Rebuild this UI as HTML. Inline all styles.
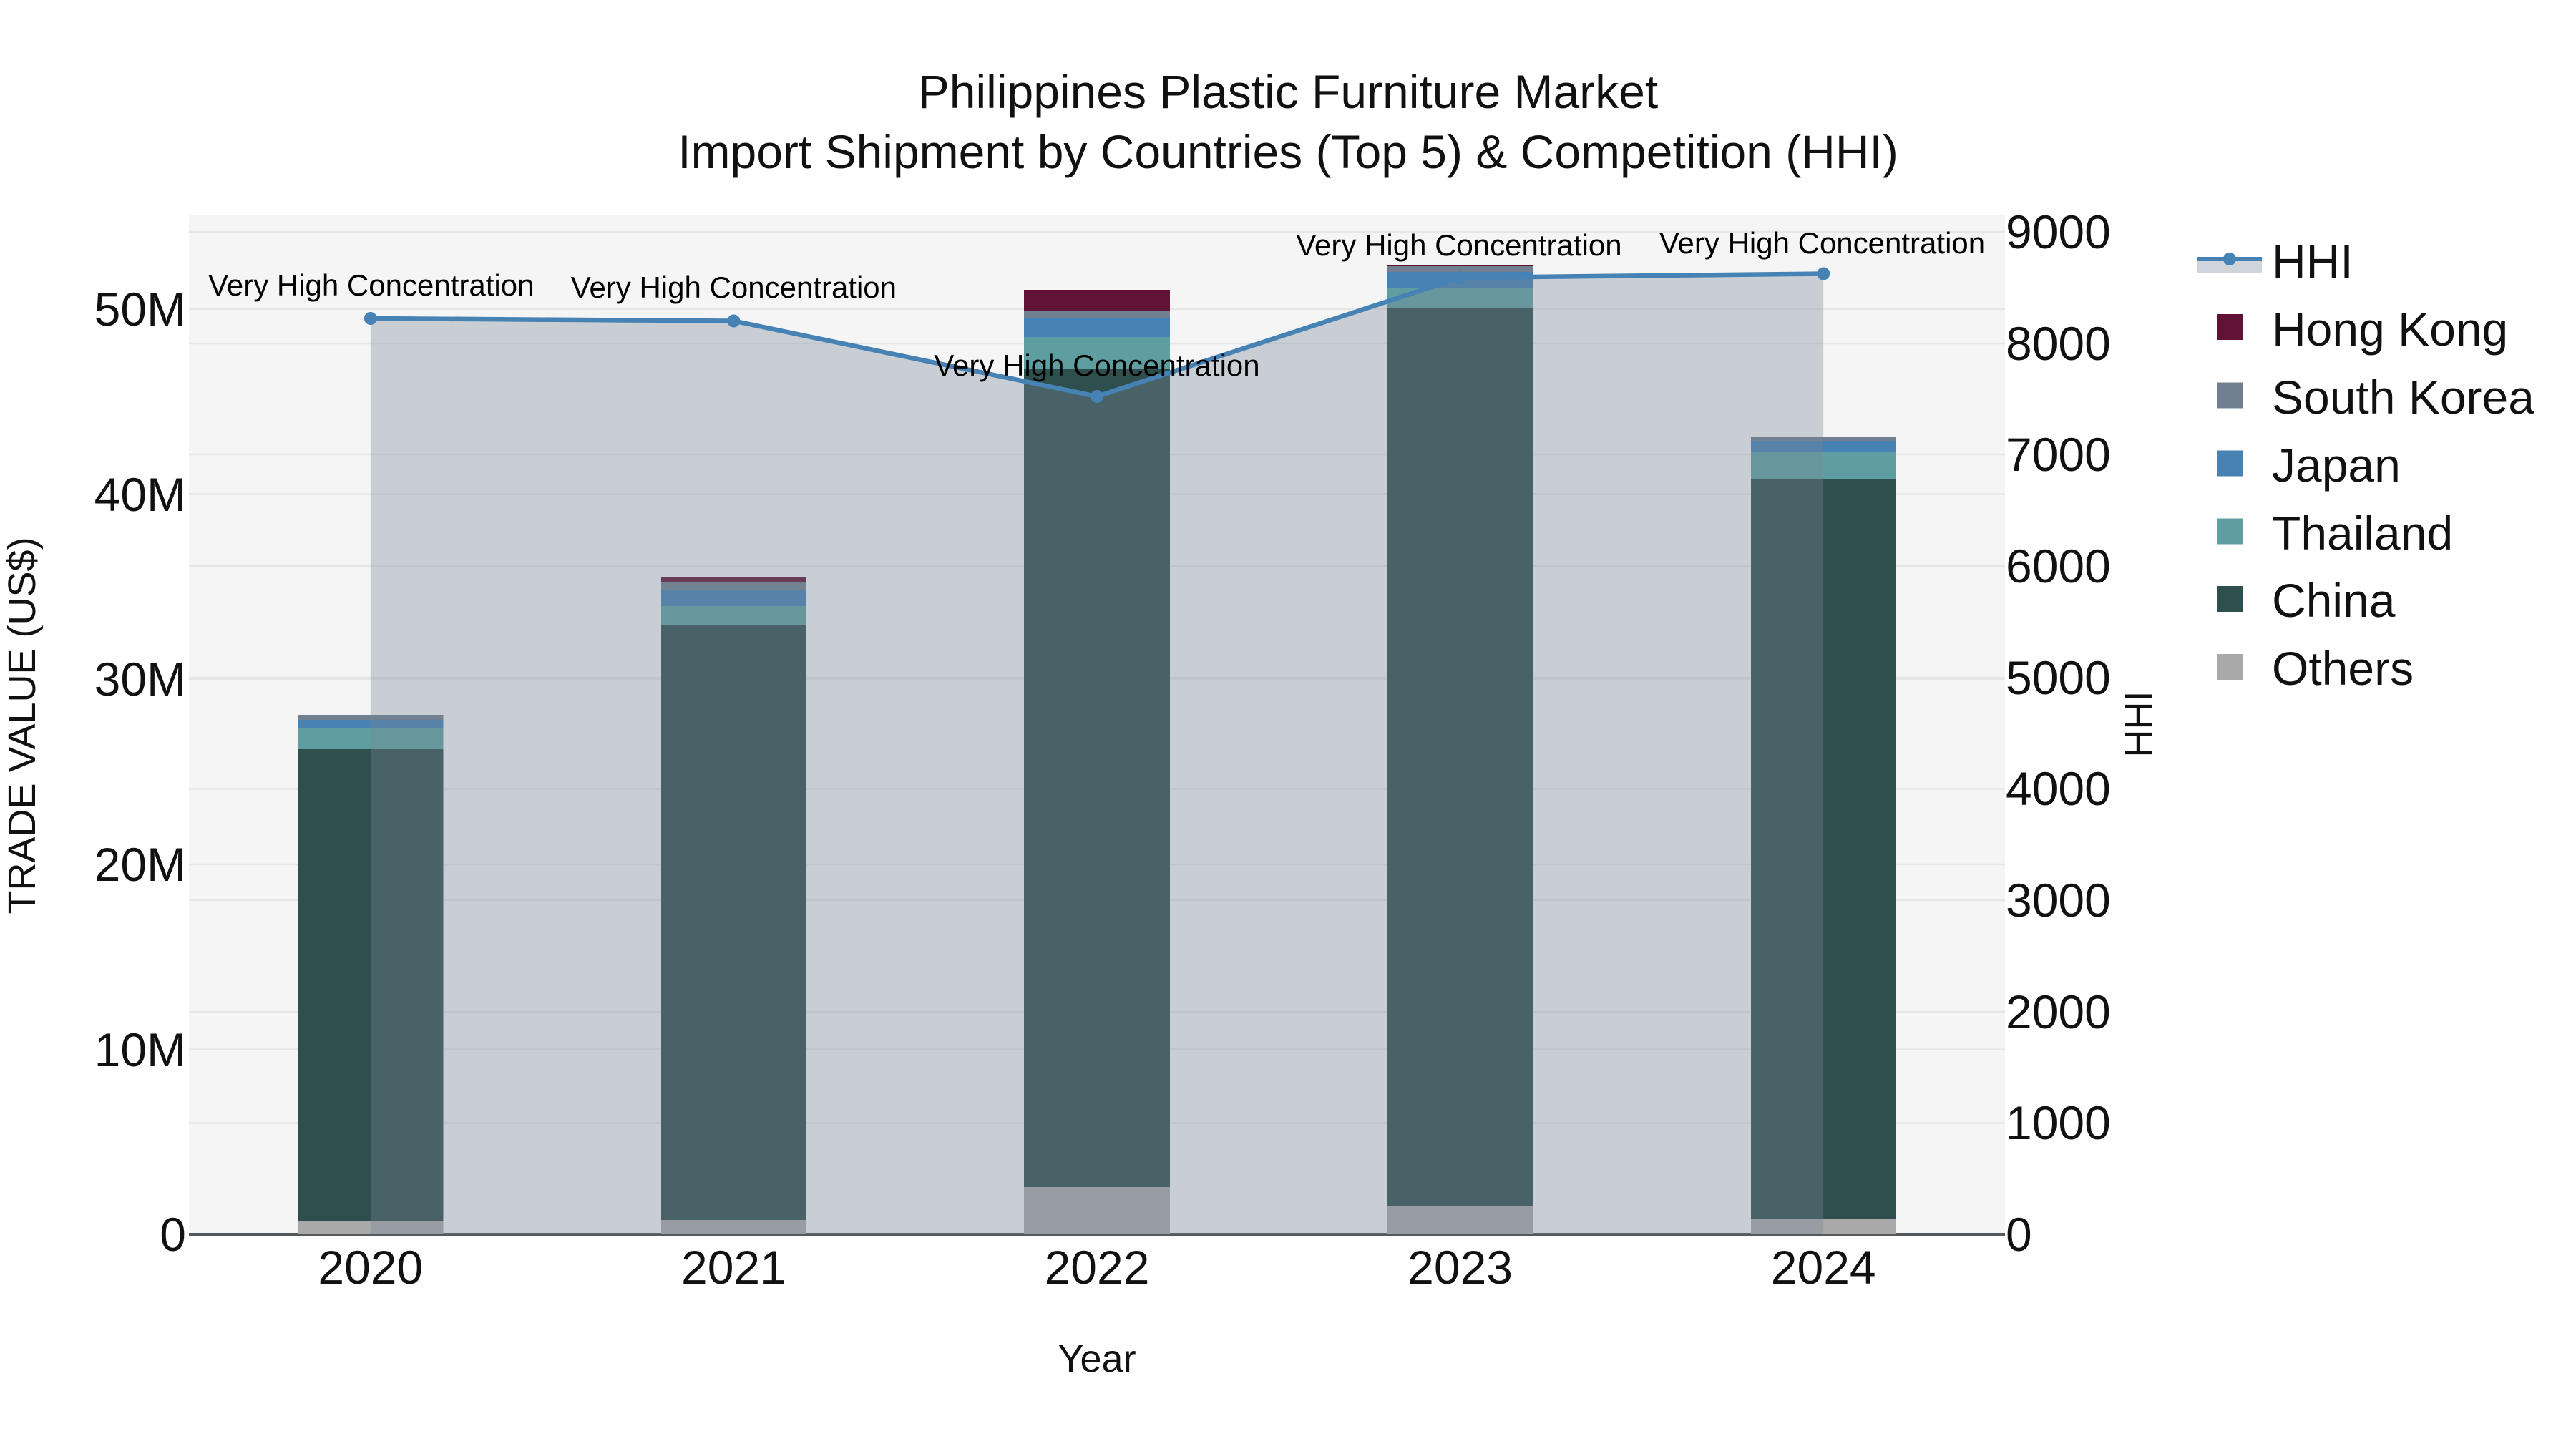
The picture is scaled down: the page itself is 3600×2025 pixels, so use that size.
<!DOCTYPE html>
<html>
<head>
<meta charset="utf-8">
<style>
html,body{margin:0;padding:0;background:#fff;width:3600px;height:2025px;overflow:hidden}
svg{display:block}
text{font-family:"Liberation Sans",sans-serif;fill:#111}
.t{font-size:66px}
.a{font-size:42px;fill:#000;text-anchor:middle}
.ax{font-size:54px}
.l{text-anchor:end}
.m{text-anchor:middle}
</style>
</head>
<body>
<svg width="3600" height="2025" viewBox="0 0 3600 2025" xmlns="http://www.w3.org/2000/svg">
<rect width="3600" height="2025" fill="#fff"/>
<rect x="264" y="300" width="2538" height="1425" fill="#f5f5f5"/>
<!-- gridlines -->
<g stroke="#e6e6e6" stroke-width="2.4">
<path d="M264 432H2802M264 690.5H2802M264 949H2802M264 1208H2802M264 1466.5H2802"/>
<path d="M264 324H2802M264 480H2802M264 635H2802M264 791H2802M264 947H2802M264 1102.5H2802M264 1258H2802M264 1414H2802M264 1569.500H2802"/>
</g>
<rect x="264" y="1723" width="2538" height="4" fill="#56595c"/>
<!-- bars -->
<g shape-rendering="crispEdges">
<!-- 2020 -->
<rect x="416" y="1706" width="203.500" height="19" fill="#a9a9a9"/>
<rect x="416" y="1047" width="203.500" height="659" fill="#2f4f4f"/>
<rect x="416" y="1018" width="203.500" height="29" fill="#5f9ea0"/>
<rect x="416" y="1006" width="203.500" height="12" fill="#4682b4"/>
<rect x="416" y="999" width="203.500" height="7" fill="#708090"/>
<!-- 2021 -->
<rect x="924" y="1705" width="203" height="20" fill="#a9a9a9"/>
<rect x="924" y="874" width="203" height="831" fill="#2f4f4f"/>
<rect x="924" y="847" width="203" height="27" fill="#5f9ea0"/>
<rect x="924" y="825" width="203" height="22" fill="#4682b4"/>
<rect x="924" y="813" width="203" height="12" fill="#708090"/>
<rect x="924" y="806" width="203" height="7" fill="#611335"/>
<!-- 2022 -->
<rect x="1431" y="1659" width="204" height="66" fill="#a9a9a9"/>
<rect x="1431" y="515" width="204" height="1144" fill="#2f4f4f"/>
<rect x="1431" y="471" width="204" height="44" fill="#5f9ea0"/>
<rect x="1431" y="445" width="204" height="26" fill="#4682b4"/>
<rect x="1431" y="434" width="204" height="11" fill="#708090"/>
<rect x="1431" y="405" width="204" height="29" fill="#611335"/>
<!-- 2023 -->
<rect x="1939" y="1685" width="203" height="40" fill="#a9a9a9"/>
<rect x="1939" y="431" width="203" height="1254" fill="#2f4f4f"/>
<rect x="1939" y="402" width="203" height="29" fill="#5f9ea0"/>
<rect x="1939" y="380" width="203" height="22" fill="#4682b4"/>
<rect x="1939" y="372" width="203" height="8" fill="#708090"/>
<rect x="1939" y="371" width="203" height="1" fill="#611335"/>
<!-- 2024 -->
<rect x="2447" y="1703" width="203" height="22" fill="#a9a9a9"/>
<rect x="2447" y="669" width="203" height="1034" fill="#2f4f4f"/>
<rect x="2447" y="632" width="203" height="37" fill="#5f9ea0"/>
<rect x="2447" y="617" width="203" height="15" fill="#4682b4"/>
<rect x="2447" y="611" width="203" height="6" fill="#708090"/>
</g>
<!-- area -->
<path d="M517.800 445L1025.400 448.500L1533 554L2040.600 388L2548.200 382.500V1725H517.800Z" fill="#778899" fill-opacity="0.35"/>
<!-- line -->
<path d="M517.800 445L1025.400 448.500L1533 554L2040.600 388L2548.200 382.500" fill="none" stroke="#4682b4" stroke-width="6.500"/>
<g fill="#4682b4">
<circle cx="517.800" cy="445" r="9"/>
<circle cx="1025.400" cy="448.500" r="9"/>
<circle cx="1533" cy="554" r="9"/>
<circle cx="2040.600" cy="388" r="9"/>
<circle cx="2548.200" cy="382.500" r="9"/>
</g>
<!-- annotations -->
<text class="a" x="518.800" y="413">Very High Concentration</text>
<text class="a" x="1025.400" y="416">Very High Concentration</text>
<text class="a" x="1533" y="525">Very High Concentration</text>
<text class="a" x="2039" y="357">Very High Concentration</text>
<text class="a" x="2546.500" y="354">Very High Concentration</text>
<!-- title -->
<text class="t m" x="1800" y="151">Philippines Plastic Furniture Market</text>
<text class="t m" x="1800" y="235">Import Shipment by Countries (Top 5) &amp; Competition (HHI)</text>
<!-- left ticks -->
<text class="t l" x="260" y="455">50M</text>
<text class="t l" x="260" y="714">40M</text>
<text class="t l" x="260" y="972">30M</text>
<text class="t l" x="260" y="1231">20M</text>
<text class="t l" x="260" y="1490">10M</text>
<text class="t l" x="260" y="1748">0</text>
<!-- right ticks -->
<text class="t" x="2803" y="347">9000</text>
<text class="t" x="2803" y="503">8000</text>
<text class="t" x="2803" y="658">7000</text>
<text class="t" x="2803" y="814">6000</text>
<text class="t" x="2803" y="970">5000</text>
<text class="t" x="2803" y="1125">4000</text>
<text class="t" x="2803" y="1281">3000</text>
<text class="t" x="2803" y="1437">2000</text>
<text class="t" x="2803" y="1592">1000</text>
<text class="t" x="2803" y="1748">0</text>
<!-- x ticks -->
<text class="t m" x="517.800" y="1794">2020</text>
<text class="t m" x="1025.400" y="1794">2021</text>
<text class="t m" x="1533" y="1794">2022</text>
<text class="t m" x="2040.600" y="1794">2023</text>
<text class="t m" x="2548.200" y="1794">2024</text>
<!-- axis titles -->
<text class="ax m" x="1533" y="1917">Year</text>
<text class="ax m" transform="translate(49 1014) rotate(-90)">TRADE VALUE (US$)</text>
<text class="ax m" transform="translate(3007 1012) rotate(-90)">HHI</text>
<!-- legend -->
<rect x="3071" y="362" width="90" height="19" fill="#778899" fill-opacity="0.35"/>
<rect x="3071" y="359" width="90" height="6" fill="#4682b4"/>
<circle cx="3116" cy="362" r="9" fill="#4682b4"/>
<rect x="3098" y="439" width="36" height="36" fill="#611335"/>
<rect x="3098" y="534.500" width="36" height="36" fill="#708090"/>
<rect x="3098" y="629.500" width="36" height="36" fill="#4682b4"/>
<rect x="3098" y="724.500" width="36" height="36" fill="#5f9ea0"/>
<rect x="3098" y="819" width="36" height="36" fill="#2f4f4f"/>
<rect x="3098" y="914" width="36" height="36" fill="#a9a9a9"/>
<text class="t" x="3175" y="388">HHI</text>
<text class="t" x="3175" y="483">Hong Kong</text>
<text class="t" x="3175" y="578">South Korea</text>
<text class="t" x="3175" y="673">Japan</text>
<text class="t" x="3175" y="768">Thailand</text>
<text class="t" x="3175" y="862">China</text>
<text class="t" x="3175" y="957">Others</text>
</svg>
</body>
</html>
